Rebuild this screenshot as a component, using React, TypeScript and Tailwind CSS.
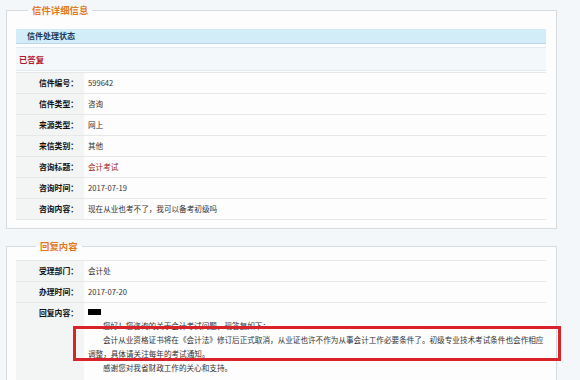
const font = "font-['Noto_Sans_CJK_SC','Noto_Sans',sans-serif]";

type Row = { label: string; value: string; tone?: "red" };

const letterRows: Row[] = [
  { label: "信件编号：", value: "599642" },
  { label: "信件类型：", value: "咨询" },
  { label: "来源类型：", value: "网上" },
  { label: "来信类别：", value: "其他" },
  { label: "咨询标题：", value: "会计考试", tone: "red" },
  { label: "咨询时间：", value: "2017-07-19" },
  { label: "咨询内容：", value: "现在从业也考不了，我可以备考初级吗" },
];

const replyRows: Row[] = [
  { label: "受理部门：", value: "会计处" },
  { label: "办理时间：", value: "2017-07-20" },
];

function InfoRow({ label, value, tone }: Row) {
  return (
    <div className="flex h-[21px] border-b border-[#e6e8e8]">
      <div className="flex w-[68px] shrink-0 items-center justify-end bg-[#f3f4f4] pr-[6px] text-[7.8px] font-bold text-[#111]">
        {label}
      </div>
      <div
        className={`flex flex-1 items-center pl-[4px] text-[7.6px] ${
          tone === "red" ? "text-[#9b1b22]" : "text-[#333]"
        }`}
      >
        {value}
      </div>
    </div>
  );
}

export default function App() {
  return (
    <div className={`relative h-[380px] w-[580px] overflow-hidden bg-[#f4f7f9] pl-[6px] pt-[3px] ${font}`}>
      <fieldset className="w-[551px] border border-[#d6dbde] bg-[#fdfdfd] pb-[8px] pl-[9px] pr-[10px]">
        <legend className="ml-[12px] px-[4px] text-[9.4px] font-bold leading-[14px] text-[#e27a1e]">
          信件详细信息
        </legend>
        <div className="mt-[12px] flex h-[15px] items-center border-b border-[#b9d9e6] bg-[#d3edf8] pl-[11px] text-[8px] font-bold text-[#1d3856]">
          信件处理状态
        </div>
        <div className="mt-[3px] flex h-[24px] items-center border-y border-[#e0ecf0] bg-[#f3f9fb] pl-[3px] text-[8.4px] font-bold text-[#b3162a]">
          已答复
        </div>
        <div className="mt-[1px] border-t border-[#e6e8e8]">
          {letterRows.map((r) => (
            <InfoRow key={r.label} {...r} />
          ))}
        </div>
      </fieldset>

      <fieldset className="mt-[10px] w-[551px] border border-[#d6dbde] bg-[#fdfdfd] pl-[9px] pr-[10px]">
        <legend className="ml-[20px] px-[4px] text-[9.4px] font-bold leading-[14px] text-[#e27a1e]">
          回复内容
        </legend>
        <div className="mt-[7px] border-t border-[#e6e8e8]">
          {replyRows.map((r) => (
            <InfoRow key={r.label} {...r} />
          ))}
          <div className="flex border-b border-[#e6e8e8]">
            <div className="w-[68px] shrink-0 bg-[#f3f4f4] pr-[6px] pt-[4px] text-right text-[7.8px] font-bold leading-[12px] text-[#111]">
              回复内容：
            </div>
            <div className="flex-1 pb-[10px] pl-[4px] pt-[6px] text-[7.6px] leading-[14px] text-[#333]">
              <div className="mb-[4px] h-[6px] w-[13px] bg-black" />
              <p className="indent-[15px]">您好！您咨询的关于会计考试问题，现答复如下：</p>
              <p className="indent-[15px]">
                会计从业资格证书将在《会计法》修订后正式取消，从业证也许不作为从事会计工作必要条件了。初级专业技术考试条件也会作相应
              </p>
              <p>调整，具体请关注每年的考试通知。</p>
              <p className="indent-[15px]">感谢您对我省财政工作的关心和支持。</p>
            </div>
          </div>
        </div>
      </fieldset>

      <div className="absolute left-[73px] top-[326px] h-[35px] w-[488px] border-[3px] border-[#d9232b]" />
    </div>
  );
}
